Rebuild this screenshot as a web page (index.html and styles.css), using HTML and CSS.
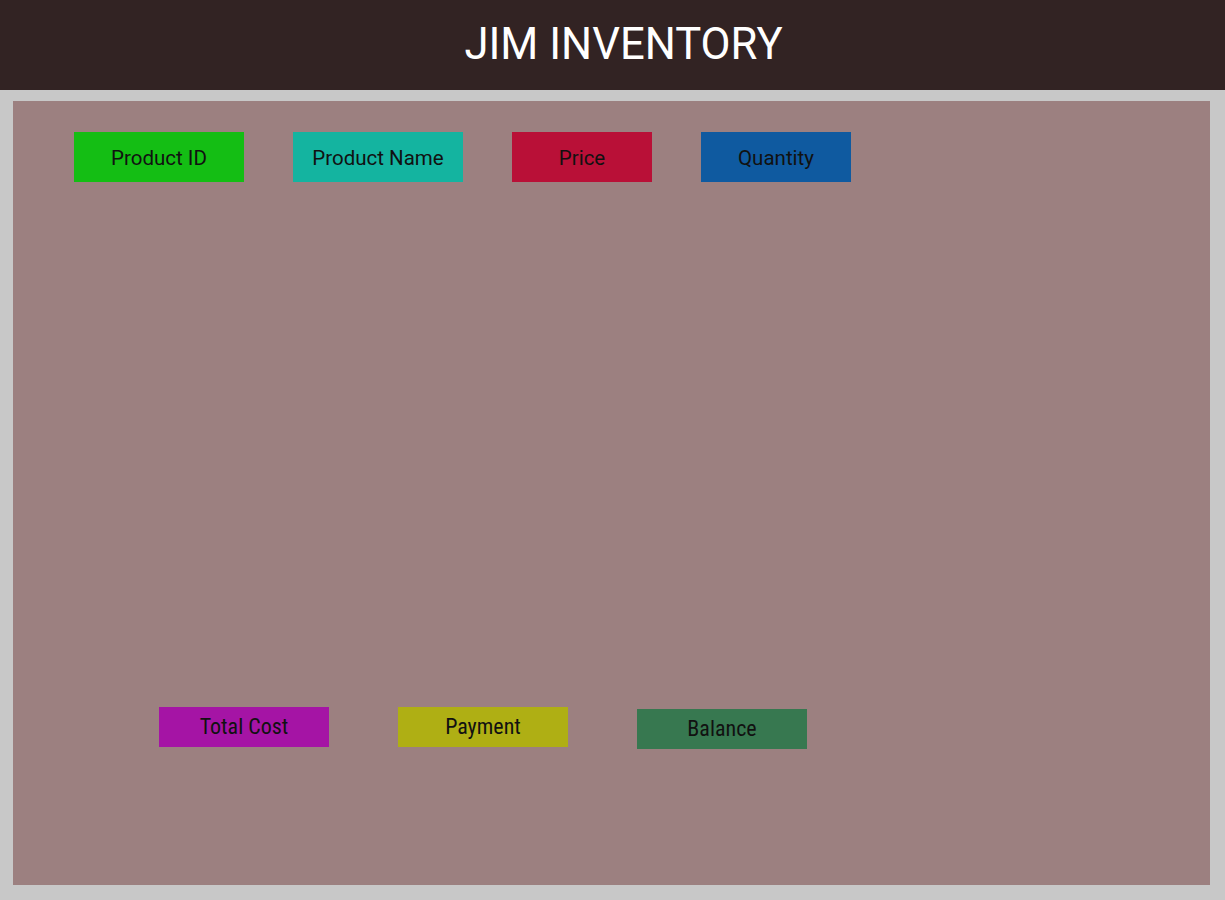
FILE: index.html
```html
<!DOCTYPE html>
<html>
<head>
<meta charset="utf-8">
<link rel="stylesheet" href="styles.css">
</head>
<body>
<header class="topbar"><h1 class="title">JIM INVENTORY</h1></header>
<main class="frame">
  <section class="panel">
    <div class="row-top">
      <div class="tag tag-id">Product ID</div>
      <div class="tag tag-name">Product Name</div>
      <div class="tag tag-price">Price</div>
      <div class="tag tag-qty">Quantity</div>
    </div>
    <div class="row-bottom">
      <div class="tag2 tag-total">Total Cost</div>
      <div class="tag2 tag-pay">Payment</div>
      <div class="tag2 tag-bal">Balance</div>
    </div>
  </section>
</main>
</body>
</html>
```

FILE: styles.css
```css
html, body {
  margin: 0;
  padding: 0;
  background: #c8c8c8;
  font-family: Roboto, "Liberation Sans", sans-serif;
}
.topbar {
  height: 90px;
  background: #322323;
  display: flex;
  align-items: center;
  justify-content: center;
}
.title {
  margin: 0 0 0 22px;
  color: #ffffff;
  font-weight: 400;
  font-size: 43.6px;
  line-height: 1;
}
.frame {
  padding: 11px 15px 15px 13px;
}
.panel {
  height: 784px;
  background: #9c8080;
  box-sizing: border-box;
  padding: 31px 0 0 61px;
}
.row-top {
  display: flex;
  gap: 49px;
}
.tag {
  height: 50px;
  box-sizing: border-box;
  padding-top: 2px;
  display: flex;
  align-items: center;
  justify-content: center;
  font-size: 20.5px;
  color: #111;
}
.tag-id { width: 170px; background: #14be14; }
.tag-name { width: 170px; background: #14b4a0; }
.tag-price { width: 140px; background: #b91037; }
.tag-qty { width: 150px; background: #0f5aa0; }
.row-bottom {
  display: flex;
  align-items: flex-start;
  gap: 69px;
  margin-top: 525px;
  margin-left: 85px;
}
.tag2 {
  width: 170px;
  height: 40px;
  box-sizing: border-box;
  padding-bottom: 2px;
  display: flex;
  align-items: center;
  justify-content: center;
  font-size: 22px;
  font-stretch: condensed;
  color: #111;
}
.tag-total { background: #a514a5; }
.tag-pay { background: #afaf14; }
.tag-bal { background: #377850; margin-top: 2px; }
```
